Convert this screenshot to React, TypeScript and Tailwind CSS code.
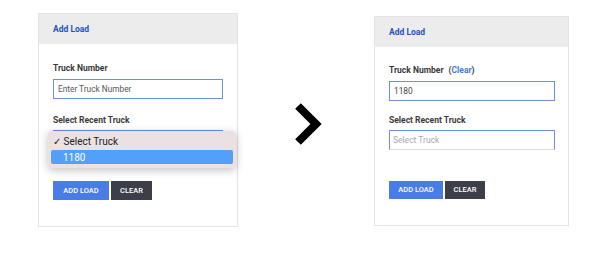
import React from 'react'

const font = { fontFamily: 'Roboto, "Liberation Sans", sans-serif' }

interface CardProps {
  width: string
  height: string
  inputWidth: string
  filled?: boolean
  dropdownOpen?: boolean
}

const Chevron = () => (
  <svg width="30" height="44" viewBox="0 0 30 44">
    <path d="M5 4 L23 22 L5 40" fill="none" stroke="#000" strokeWidth="8" strokeLinejoin="miter" strokeLinecap="butt" />
  </svg>
)

const AddLoadCard: React.FC<CardProps> = ({ width, height, inputWidth, filled, dropdownOpen }) => {
  return (
    <div className={`${width} ${height} border border-[#e2e2ea] bg-white flex flex-col`}>
      {/* Header */}
      <div className="h-[30px] bg-[#ececec] flex items-center px-[14px]">
        <span className="text-[8.5px] font-bold text-[#2152c4]">Add Load</span>
      </div>

      {/* Body */}
      <div className={`flex flex-col px-[14px] ${filled ? 'pt-[17px]' : 'pt-[18px]'}`}>
        <div className="text-[8.5px] font-bold text-[#3a3a3a] leading-[12px]">
          Truck Number
          {filled && (
            <span className="ml-[5px]">
              (<span className="text-[#3f7ae0]">Clear</span>)
            </span>
          )}
        </div>
        <div className={`${inputWidth} h-[20px] mt-[5px] border border-[#6f8fd8] flex items-center px-[4px]`}>
          <span className={`text-[8.3px] ${filled ? 'text-[#444]' : 'text-[#555]'}`}>
            {filled ? '1180' : 'Enter Truck Number'}
          </span>
        </div>

        <div className={`text-[8.5px] font-bold text-[#3a3a3a] leading-[12px] ${filled ? 'mt-[13px]' : 'mt-[15px]'}`}>
          Select Recent Truck
        </div>
        <div className="relative mt-[4px]">
          <div className={`${inputWidth} h-[20px] border border-[#6f8fd8] border-b-[#dcdcdc] flex items-center px-[3px]`}>
            <span className={`text-[8.5px] text-[#a8a8a8] ${dropdownOpen ? 'invisible' : ''}`}>Select Truck</span>
          </div>
          {dropdownOpen && (
            <div className="absolute left-[-5px] top-[1px] w-[188px] h-[37px] rounded-[4px] bg-[#ebe1e3] shadow-[0_2px_8px_rgba(0,0,0,0.25)] flex flex-col px-[3px] pt-[3px]">
              <div className="h-[15px] flex items-center text-[10px] text-[#222] pl-[2px] whitespace-pre">
                {'✓ Select Truck'}
              </div>
              <div className="h-[14px] mt-[1px] rounded-[2px] bg-[#53a0fa] flex items-center pl-[12px] text-[10px] text-white">
                1180
              </div>
            </div>
          )}
        </div>

        <div className="flex gap-[2px] mt-[31px]">
          <button className={`${filled ? 'w-[54px] h-[18px]' : 'w-[56px] h-[19px]'} bg-[#4a7ce8] text-white text-[7.5px] font-medium uppercase`}>
            Add Load
          </button>
          <button className={`${filled ? 'w-[40px] h-[18px]' : 'w-[41px] h-[19px]'} bg-[#3c3e4a] text-white text-[7.5px] font-medium uppercase`}>
            Clear
          </button>
        </div>
      </div>
    </div>
  )
}

export default function App() {
  return (
    <div className="w-[604px] h-[274px] bg-white flex items-start" style={font}>
      <div className="ml-[38px] mt-[13px]">
        <AddLoadCard width="w-[200px]" height="h-[214px]" inputWidth="w-[170px]" dropdownOpen />
      </div>
      <div className="ml-[55px] mt-[102px]">
        <Chevron />
      </div>
      <div className="ml-[51px] mt-[16px]">
        <AddLoadCard width="w-[195px]" height="h-[210px]" inputWidth="w-[166px]" filled />
      </div>
    </div>
  )
}
